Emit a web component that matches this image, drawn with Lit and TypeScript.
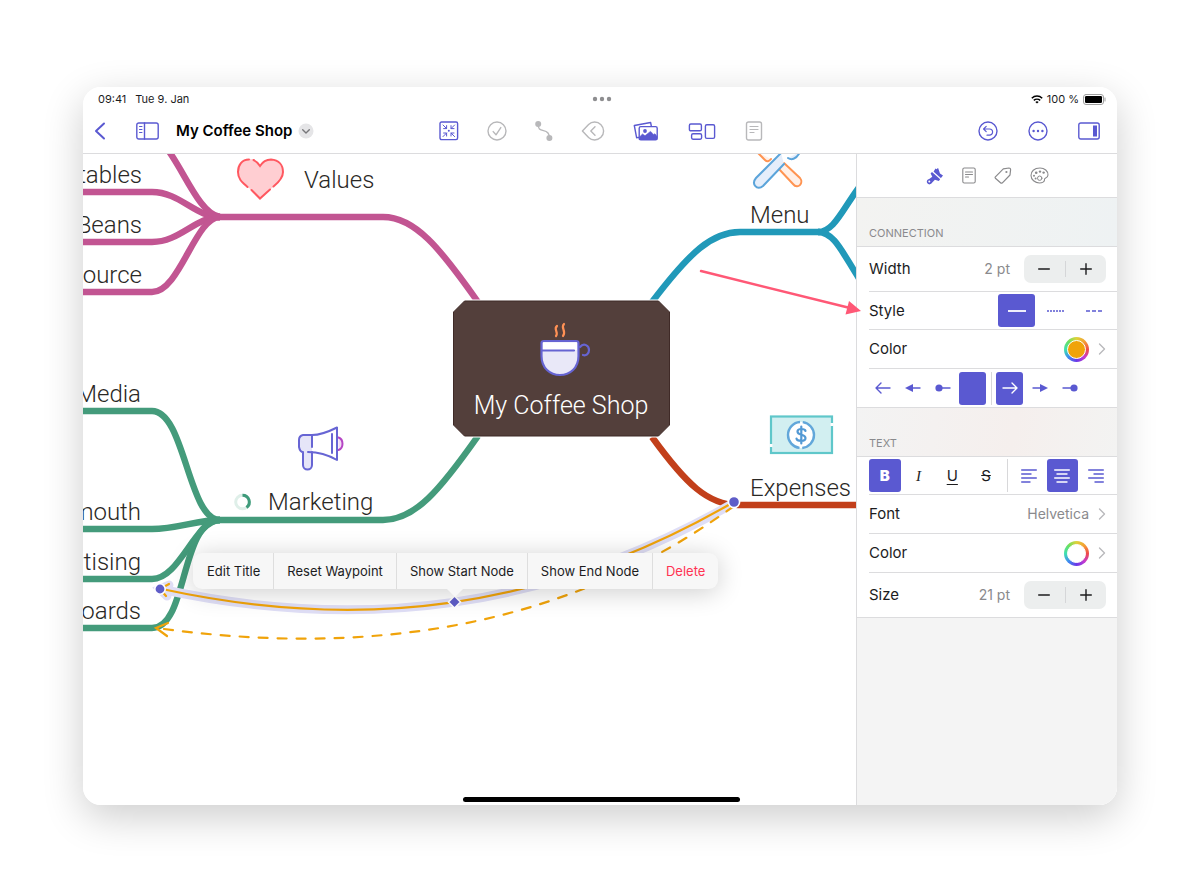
import { LitElement, html, svg, css } from "lit";
import { customElement, state } from "lit/decorators.js";
import { classMap } from "lit/directives/class-map.js";

type Label = { text: string; x: number; y: number; end?: boolean };

const LABELS: Label[] = [
  { text: "tables", x: 142, y: 183, end: true },
  { text: "Beans", x: 142, y: 233, end: true },
  { text: "ource", x: 142, y: 283, end: true },
  { text: "Media", x: 141, y: 402, end: true },
  { text: "mouth", x: 141, y: 520, end: true },
  { text: "rtising", x: 141, y: 570, end: true },
  { text: "oards", x: 141, y: 619, end: true },
  { text: "Values", x: 304, y: 188 },
  { text: "Menu", x: 750, y: 223 },
  { text: "Marketing", x: 268, y: 510 },
  { text: "Expenses", x: 750, y: 496 },
];

const BRANCHES: { color: string; paths: string[] }[] = [
  {
    color: "#c25592",
    paths: [
      "M478 302C440 248 415 217 383 217H218",
      "M80 192H152C180 192 195 217 220 217",
      "M80 242H152C180 242 195 217 220 217",
      "M80 292H152C180 292 195 217 220 217",
      "M168 150C185 173 200 214 220 217",
    ],
  },
  {
    color: "#2199b9",
    paths: [
      "M652 302C690 252 712 232 740 232H820",
      "M818 232C834 232 842 210 860 186",
      "M818 232C834 232 842 252 860 280",
    ],
  },
  {
    color: "#449b7b",
    paths: [
      "M478 436C440 490 415 520 383 520H215",
      "M80 411H152C185 411 188 520 220 520",
      "M80 529H152C177 529 197 520 220 520",
      "M80 579H152C180 579 195 520 220 520",
      "M80 628H152C188 628 180 520 220 520",
    ],
  },
  { color: "#c23f1a", paths: ["M652 437C686 484 708 505 738 505H860"] },
];

@customElement("app-root")
export class AppRoot extends LitElement {
  static styles = css`
    :host {
      --accent: #5a59d1;
      --line: #dcdcde;
      display: flex;
      box-sizing: border-box;
      min-height: 100vh;
      padding: 87px 83px 86px;
      background: #fff;
      color: #1c1c1e;
      font: 15px/20px Inter, "Liberation Sans", sans-serif;
    }
    * { box-sizing: border-box; }
    svg { display: block; flex: none; fill: none; stroke: currentColor; }
    button {
      display: flex;
      align-items: center;
      justify-content: center;
      margin: 0;
      padding: 0;
      border: 0;
      background: none;
      color: inherit;
      font: inherit;
      cursor: pointer;
    }
    .window {
      flex: 1;
      min-width: 0;
      display: flex;
      flex-direction: column;
      position: relative;
      background: #fff;
      border-radius: 18px;
      overflow: hidden;
    }
    .shadow {
      flex: 1;
      min-width: 0;
      display: flex;
      border-radius: 18px;
      box-shadow: 0 12px 40px rgba(0, 0, 0, 0.2);
    }
    .status {
      display: grid;
      grid-template-columns: 1fr auto 1fr;
      align-items: center;
      height: 24px;
      padding: 0 11px 0 15px;
      font-size: 11px;
      line-height: 16px;
    }
    .status-left { display: flex; gap: 9px; }
    .status-right { display: flex; gap: 4px; align-items: center; justify-content: flex-end; }
    .dots { color: #8e8e90; }
    .toolbar {
      display: grid;
      grid-template-columns: 1fr auto 1fr;
      align-items: center;
      height: 43px;
      padding: 0 10px 2px 11px;
      border-bottom: 1px solid var(--line);
      color: var(--accent);
    }
    .group { display: flex; align-items: center; }
    .left { gap: 17px; }
    .back { width: 12px; }
    .panel-left { padding-left: 13px; }
    .title { gap: 6px; color: #000; font-weight: 600; font-size: 15px; white-space: nowrap; }
    .center { gap: 28px; }
    .wide { width: 30px; }
    .right { justify-content: flex-end; gap: 30px; padding-right: 7px; }
    .off { color: #b8b8ba; }
    .body { flex: 1; display: flex; min-height: 0; position: relative; }
    .canvas { flex: 1; min-width: 0; position: relative; overflow: hidden; }
    .map { position: absolute; left: 0; top: 0; }
    .map text {
      stroke: none;
      fill: #2a2825;
      font-family: Roboto, "Liberation Sans", sans-serif;
      font-weight: 300;
      font-size: 24px;
    }
    .map .end { text-anchor: end; }
    .map .root-label { fill: #fff; text-anchor: middle; font-size: 25px; }
    .menu {
      position: absolute;
      left: 110px;
      top: 399px;
      display: flex;
      height: 36px;
      border-radius: 9px;
      background: #f7f7f7;
      box-shadow: 0 3px 26px rgba(0, 0, 0, 0.2);
      color: #1c1c1e;
      font-size: 13px;
    }
    .menu::after {
      content: "";
      position: absolute;
      left: 254px;
      top: 36px;
      border: 8px solid transparent;
      border-top-color: #f7f7f7;
      border-bottom: 0;
    }
    .menu button { padding: 0 13px; border-left: 1px solid #dedede; white-space: nowrap; }
    .menu button:first-child { border-left: 0; padding-left: 14px; }
    .menu .delete { color: #ff3352; }
    .pointer { position: absolute; right: 0; top: 0; pointer-events: none; }
    .home {
      position: absolute;
      left: 50%;
      bottom: 3px;
      width: 277px;
      height: 5px;
      margin-left: -137px;
      border-radius: 3px;
      background: #000;
    }
    .side {
      flex: none;
      width: 261px;
      border-left: 1px solid var(--line);
      background: #f4f4f4;
    }
    .tabs {
      display: flex;
      align-items: center;
      justify-content: center;
      gap: 18px;
      height: 44px;
      border-bottom: 1px solid var(--line);
      background: #fff;
      color: #8a8a8c;
    }
    .tabs .on { color: var(--accent); }
    h2 {
      display: flex;
      align-items: flex-end;
      height: 49px;
      margin: 0;
      padding: 0 12px 3px;
      border-bottom: 1px solid var(--line);
      background: linear-gradient(100deg, #f3f3f1, #eef2f3);
      color: #8a8a8d;
      font-size: 11px;
      font-weight: 400;
    }
    h2.warm {
      height: 50px;
      border-top: 1px solid var(--line);
      background: linear-gradient(100deg, #f3f3f3, #f5efed 60%, #f3f3f2);
    }
    .rows { margin: 0; padding: 0 0 0 12px; background: #fff; }
    .row {
      display: flex;
      align-items: center;
      height: 39px;
      padding-right: 11px;
      border-bottom: 1px solid var(--line);
      width: 100%;
    }
    .rows .row:last-child { border-bottom: 0; }
    .row.tall { height: 45px; }
    .row.tall:last-child { height: 44px; }
    .row.short { height: 38px; }
    .name { flex: 1; text-align: left; color: #1c1c1e; }
    .value { color: #8a8a8d; font-size: 14px; margin-right: 14px; }
    .stepper {
      display: flex;
      width: 82px;
      height: 28px;
      border-radius: 7px;
      background: #eceeee;
      align-items: center;
    }
    .stepper button { flex: 1; height: 28px; }
    .stepper i { width: 1px; height: 16px; background: #d5d6d8; }
    .seg { width: 37px; height: 33px; border-radius: 3px; color: var(--accent); }
    .seg.on { background: var(--accent); color: #fff; }
    .styles { display: flex; gap: 2px; margin-right: -7px; }
    .ring {
      width: 25px;
      height: 25px;
      border-radius: 50%;
      padding: 3px;
      margin-right: 9px;
      background: conic-gradient(#ddd23a, #f59e33 45deg, #ef4a4a 90deg, #c53ad0 135deg, #6a38e8 180deg, #3f8cf0 225deg, #3fe0b0 270deg, #6be060 315deg, #ddd23a);
    }
    .ring b { display: block; width: 19px; height: 19px; border: 1px solid #fff; border-radius: 50%; background: #f0a30a; }
    .ring b.white { background: #fff; }
    .chev { color: #b9b9bc; }
    .ends { gap: 3px; padding-right: 0; }
    .ends .seg { width: 27px; }
    .ends i, .marks i { width: 1px; height: 33px; background: #d8d8da; }
    .ends i { margin: 0 1px 0 2px; }
    .marks { gap: 2px; padding-right: 5px; }
    .marks .seg { width: 32px; font-size: 15px; }
    .marks .seg:nth-child(-n + 4):not(.on) { color: #1c1c1e; }
    .marks i { margin: 0 3px; }
    .bold { font-weight: 900; }
    .italic { font-family: "Liberation Serif", serif; font-style: italic; font-size: 18px; }
    .under { text-decoration: underline; text-underline-offset: 3px; }
    .strike { text-decoration: line-through; }
    .foot { border-top: 1px solid var(--line); }
    .font-value { margin-right: 9px; }
  `;

  @state() private line = 0;
  @state() private startCap = 3;
  @state() private endCap = 0;
  @state() private marks = new Set(["bold"]);
  @state() private align = 1;
  @state() private lineWidth = 2;
  @state() private size = 21;

  private icon(w: number, h: number, body: unknown) {
    return html`<svg width=${w} height=${h} viewBox="0 0 ${w} ${h}" stroke-width="1.4" stroke-linecap="round" stroke-linejoin="round" aria-hidden="true">${body}</svg>`;
  }

  private noteIcon(w: number, h: number) {
    return this.icon(w, h, svg`<rect x="1.500" y="1" width=${w - 3} height=${h - 2} rx="2"/><path d="M5 5.500H${w - 5}M5 8.500H${w - 5}M5 11.500H${w / 2}" stroke-width="1.200"/>`);
  }

  private chevron() {
    return html`<span class="chev">${this.icon(8, 12, svg`<path d="M1.500 1L6.500 6L1.500 11"/>`)}</span>`;
  }

  private renderToolbar() {
    return html`<header class="toolbar">
      <div class="group left">
        <button class="back" aria-label="Back">${this.icon(12, 18, svg`<path d="M10 1.500L2 9L10 16.500" stroke-width="2"/>`)}</button>
        <button class="panel-left" aria-label="Outline">${this.icon(23, 18, svg`<rect x=".8" y="1" width="21.400" height="16" rx="2"/><path d="M8.500 1V17"/><path d="M3.500 4.500H6M3.500 7.500H6M3.500 10.500H6" stroke-width="1"/>`)}</button>
        <button class="title">My Coffee Shop ${this.icon(16, 16, svg`<circle cx="8" cy="8" r="7.500" fill="#e5e5e7" stroke="none"/><path d="M4.700 6.700L8 10L11.300 6.700" stroke="#77777a"/>`)}</button>
      </div>
      <div class="group center">
        <button aria-label="Focus">${this.icon(20, 20, svg`<rect x="1" y="1" width="17.600" height="17.600" rx="1.500"/><g stroke-width="1"><path d="M4 4L7.600 7.600M7.600 4.600V7.600H4.600M15.600 4L12 7.600M12 4.600V7.600H15M4 15.600L7.600 12M4.600 12H7.600V15M15.600 15.600L12 12M15 12H12V15"/></g><circle cx="9.800" cy="9.800" r="1" fill="currentColor" stroke="none"/>`)}</button>
        <button class="off" aria-label="Task">${this.icon(20, 20, svg`<circle cx="10" cy="10" r="9"/><path d="M6.200 10.600L9 13.800L13.800 6.600"/>`)}</button>
        <button class="off" aria-label="Connection">${this.icon(18, 20, svg`<circle cx="3.200" cy="3" r="3" fill="currentColor" stroke="none"/><circle cx="14.400" cy="17" r="3" fill="currentColor" stroke="none"/><path d="M3.200 3C3 8 5 9 8.500 9.600S14.500 12 14.400 17"/>`)}</button>
        <button class="off" aria-label="Tag">${this.icon(24, 20, svg`<path d="M1.400 10L7.600 3.400C9.400 1.600 11.300 1 13.600 1A9 9 0 0 1 13.600 19C11.300 19 9.400 18.400 7.600 16.600Z"/><path d="M14 5.800L9.800 10L14 14.200"/>`)}</button>
        <button aria-label="Images">${this.icon(26, 20, svg`<path d="M5.600 16.400L3.600 16.700L1.300 4.500L17.600 1.500L18.300 5"/><rect x="6.200" y="5.600" width="18" height="13.200" rx="1.600"/><circle cx="12" cy="10" r="1.900" fill="currentColor" stroke="none"/><path d="M6.500 16L9.500 13L12 14.800L17.400 10.400C19 11 19.500 13.500 20.500 13.400L22 12.800L24 15.500V18.500H6.500Z" fill="currentColor" stroke-width=".6"/>`)}</button>
        <button class="wide" aria-label="Layout">${this.icon(28, 18, svg`<rect x="1.400" y="2" width="12" height="6.800" rx="1.400"/><rect x="3.600" y="11.800" width="10" height="5.400" rx="1.400"/><rect x="17.400" y="2.800" width="9.200" height="13.600" rx="1.400"/>`)}</button>
        <button class="off" aria-label="Note">${this.noteIcon(18, 20)}</button>
      </div>
      <div class="group right">
        <button aria-label="Undo">${this.icon(20, 20, svg`<circle cx="10" cy="10" r="9"/><path d="M6 8H11.500A3 3 0 0 1 11.500 14.200H9M8.200 5.400L5.600 8L8.200 10.600" stroke-width="1.200"/>`)}</button>
        <button aria-label="More">${this.icon(20, 20, svg`<circle cx="10" cy="10" r="9"/><g fill="currentColor" stroke="none"><circle cx="5.600" cy="10" r="1.200"/><circle cx="10" cy="10" r="1.200"/><circle cx="14.400" cy="10" r="1.200"/></g>`)}</button>
        <button aria-label="Inspector">${this.icon(22, 18, svg`<rect x=".8" y="1" width="20.400" height="16" rx="2"/><path d="M15 3.600H19V14.400H15Z" fill="currentColor" stroke="none"/>`)}</button>
      </div>
    </header>`;
  }

  private renderMap() {
    return html`<svg class="map" width="773" height="651" viewBox="83 154 773 651">
      ${BRANCHES.map((b) => svg`<g stroke=${b.color} stroke-width="6.400">${b.paths.map((d) => svg`<path d=${d}/>`)}</g>`)}
      ${LABELS.map((l) => svg`<text class=${l.end ? "end" : ""} x=${l.x} y=${l.y}>${l.text}</text>`)}

      <g stroke="#ff5860" stroke-width="2" stroke-linecap="round">
        <path d="M260 166C264 160 268 159 271 159C278 159 283 165 283 172C283 178 280 182 272 188L260 199L249 188C241 182 238 178 238 172C238 164 244 159 250 159C255 159 258 162 260 166Z" fill="#ffced2" stroke="none"/>
        <path d="M249 159.500C242 159.500 238 165 238 172C238 179 242 182 247.500 187M253.500 160Q257 161.500 260 166Q264 159.500 271 159.500C279 160 283 165 283 172C283 178 279 182 273.500 186.500M251.500 190L260 198.500L270 189.500"/>
      </g>

      <g stroke-width="2" stroke-linecap="round" stroke-linejoin="round">
        <path d="M757 152L765 160Q768 163 771 159" fill="#fff0e8" stroke="#ff9452"/>
        <path d="M778 168L793 184C798 190 804 183 800 178L784 163Z" fill="#fff0e8" stroke="#ff9452"/>
        <path d="M781 153L756 178C751 184 757 191 763 186L784 164" fill="#e5eefb" stroke="#5ba4da"/>
        <path d="M800 152C796 160 791 160 788 158" fill="#e5eefb" stroke="#5ba4da"/>
      </g>

      <path d="M464.500 301H658.500L669.500 312V425L658.500 436H464.500L453.500 425V312Z" fill="#533f3b" stroke="#fff" stroke-width="3"/>
      <path d="M464.500 301H658.500L669.500 312V425L658.500 436H464.500L453.500 425V312Z" fill="#533f3b" stroke="#3f2a27" stroke-width="1"/>
      <text class="root-label" x="561" y="414">My Coffee Shop</text>
      <g stroke-width="2.200" stroke-linecap="round">
        <path d="M557 326C553 329 559 332 556 336M564 324C560 328 567 331 563 336" stroke="#ff9155"/>
        <path d="M541.500 343Q541.500 341 544 341H576Q578.500 341 578.500 343V356C578.500 368 570 375 560 375S541.500 368 541.500 356Z" fill="#e9e8f8" stroke="#6664d2"/>
        <path d="M543 342.500H577V350H543Z" fill="#fff" stroke="none"/>
        <path d="M542 350.500H574M580 347C584 342 589 346 589 350S586 356 583 355" stroke="#6664d2"/>
      </g>

      <g stroke="#5fc7ca" stroke-width="2.200">
        <rect x="771" y="416.500" width="61" height="36.500" fill="#d2eff1"/>
        <path d="M771 444V447M832 423V426" stroke="#fff" stroke-width="3"/>
        <circle cx="801" cy="435" r="13" fill="#fff" stroke="#62a7da" stroke-width="2.400" stroke-dasharray="38 2.840" stroke-dashoffset="19"/>
        <path d="M805.500 431C805 428.500 797.500 428 797.500 431.500C797.500 436 805.500 433.500 805.500 438C805.500 442 797 441.500 796.500 438.500M801.300 426.500V443.500" stroke="#5299d4" stroke-width="2.200" stroke-linecap="round"/>
      </g>

      <g stroke="#6765d4" stroke-width="2" stroke-linecap="round" stroke-linejoin="round">
        <path d="M338.500 437.500A5.500 6.500 0 0 1 338.500 450" fill="#f3dcf5" stroke="#b545c4"/>
        <path d="M312 435L303 435Q299 436 299 440V447Q300 452 303 452V465A4 4 0 0 0 312 465V452" fill="#e6e5f8"/>
        <path d="M312 435C322 435 330 431 337 427.500V460C330 456 322 452 308 452M312 436V447M332 434V453" fill="none"/>
      </g>

      <circle cx="242.500" cy="502" r="6.800" stroke="#dfefe9" stroke-width="3"/>
      <path d="M242.500 495.200A6.800 6.800 0 0 1 246.500 507.500" stroke="#3f9b7b" stroke-width="3"/>

      <g stroke-linecap="round">
        <path d="M160 589C360 632 545 611 734 503" stroke="#dfdef6" stroke-width="9"/>
        <path d="M169 585L160 589L167 596" stroke="#dfdef6" stroke-width="9"/>
        <path d="M162 589C360 632 545 611 732 503M169 584L160 589L166 596" stroke="#f0a30a" stroke-width="2.200"/>
        <path d="M164 629C360 655 560 633 734 506" stroke="#f0a30a" stroke-width="2.200" stroke-dasharray="9 10"/>
        <path d="M168 623L156 628L167 636" stroke="#f0a30a" stroke-width="2.200"/>
      </g>
      <g fill="#5f5dc8" stroke="#fff" stroke-width="1.600">
        <circle cx="160" cy="589" r="5.200"/>
        <circle cx="734" cy="502" r="5.600"/>
        <path d="M454.500 596L460.500 602L454.500 608L448.500 602Z"/>
      </g>
    </svg>`;
  }

  private stepper(label: string, minus: () => void, plus: () => void) {
    return html`<span class="stepper">
      <button aria-label="Decrease ${label}" @click=${minus}>${this.icon(12, 12, svg`<path d="M.7 6H11.300"/>`)}</button><i></i>
      <button aria-label="Increase ${label}" @click=${plus}>${this.icon(12, 12, svg`<path d="M.7 6H11.300M6 .7V11.300"/>`)}</button>
    </span>`;
  }

  private seg(on: boolean, label: string, click: () => void, body: unknown, extra = "plain") {
    return html`<button class=${classMap({ seg: true, on, [extra]: true })} aria-label=${label} aria-pressed=${on} @click=${click}>${body}</button>`;
  }

  private toggle(name: string) {
    const next = new Set(this.marks);
    next.has(name) ? next.delete(name) : next.add(name);
    this.marks = next;
  }

  private renderSide() {
    const lines = ["none", "2 1", "4 2"];
    const starts = [
      svg`<path d="M1 6H15M6 1L1 6L6 11"/>`,
      svg`<path d="M7 6H15"/><path d="M0 6L8 2V10Z" fill="currentColor" stroke="none"/>`,
      svg`<path d="M4 6H15"/><circle cx="4" cy="6" r="3.600" fill="currentColor" stroke="none"/>`,
      "",
    ];
    const ends = [
      svg`<path d="M1 6H15M10 1L15 6L10 11"/>`,
      svg`<path d="M1 6H9"/><path d="M16 6L8 2V10Z" fill="currentColor" stroke="none"/>`,
      svg`<path d="M1 6H12"/><circle cx="12" cy="6" r="3.600" fill="currentColor" stroke="none"/>`,
    ];
    const marks = [["bold", "B"], ["italic", "I"], ["under", "U"], ["strike", "S"]];
    const aligns = ["M.7 1H15.300M.7 5H10M.7 9H15.300M.7 13H9", "M.7 1H15.300M3 5H13M.7 9H15.300M3 13H13", "M.7 1H15.300M6 5H15.300M.7 9H15.300M7 13H15.300"];
    return html`<aside class="side">
      <nav class="tabs">
        <button class="on" aria-label="Style">${this.icon(18, 18, svg`<g fill="currentColor" stroke="none"><path d="M7.500 4.800L9.500 1.400L10.800 2.200L12 .8L14 6.500L17 8.400L14.800 11.200Z"/><path d="M6 5L14.200 12.200L12.800 14L8.900 12.700L6 15.800A2.700 2.700 0 1 1 3.200 12L6.300 9.700L4.600 6.600Z"/></g><path d="M7.200 4.600L15 11.500" stroke="#fff" stroke-width=".4"/><circle cx="3.300" cy="14.600" r="1" fill="#fff" stroke="none"/>`)}</button>
        <button aria-label="Note">${this.icon(14, 17, svg`<g stroke-width="1.100"><rect x=".8" y="1" width="12.400" height="15" rx="1.500"/><path d="M3.500 5H10.500M3.500 7.500H10.500M3.500 10H6.500"/></g>`)}</button>
        <button aria-label="Tags">${this.icon(18, 17, svg`<g stroke-width="1.200"><path d="M1.400 9.800L9.300 1.800L15 1Q16.600 1 16.600 2.600L16 8L8.400 15.800Q7.400 16.600 6.500 15.800L1.400 11.200Q.8 10.500 1.400 9.800Z"/></g><circle cx="12.400" cy="5" r="1.100" fill="currentColor" stroke="none"/>`)}</button>
        <button aria-label="Theme">${this.icon(19, 17, svg`<path d="M10 1C4 1 1 4.500 1 8.500S5 16 9.500 16C12 16 15 14.800 14.500 12.500C14 10.500 17.800 11.500 18 8C18.200 4 14.500 1 10 1Z" stroke-width="1.100"/><circle cx="9.700" cy="11.200" r="2.200" stroke-width="1"/><g fill="currentColor" stroke="none"><circle cx="4" cy="8.800" r="1"/><circle cx="6.200" cy="5.800" r="1.300"/><circle cx="10" cy="4.600" r="1.200"/><circle cx="13.600" cy="5.600" r="1.200"/><circle cx="5.600" cy="11.500" r="1"/></g>`)}</button>
      </nav>
      <h2>CONNECTION</h2>
      <div class="rows">
        <div class="row tall"><span class="name">Width</span><span class="value">${this.lineWidth} pt</span>${this.stepper("width", () => (this.lineWidth = Math.max(1, this.lineWidth - 1)), () => this.lineWidth++)}</div>
        <div class="row short"><span class="name">Style</span><span class="styles">${lines.map((d, i) =>
          this.seg(this.line === i, ["Solid", "Dotted", "Dashed"][i], () => (this.line = i), html`<svg width="20" height="4" viewBox="0 0 20 4" stroke-width=${i ? 1.4 : 1.8}><path d="M1 2H19" stroke-dasharray=${d}/></svg>`))}</span></div>
        <button class="row"><span class="name">Color</span><span class="ring"><b></b></span>${this.chevron()}</button>
        <div class="row short ends">
          ${starts.map((b, i) => this.seg(this.startCap === i, `Start cap ${i + 1}`, () => (this.startCap = i), this.icon(16, 12, b)))}<i></i>
          ${ends.map((b, i) => this.seg(this.endCap === i, `End cap ${i + 1}`, () => (this.endCap = i), this.icon(16, 12, b)))}
        </div>
      </div>
      <h2 class="warm">TEXT</h2>
      <div class="rows">
        <div class="row short marks">
          ${marks.map(([k, t]) => this.seg(this.marks.has(k), k, () => this.toggle(k), t, k))}<i></i>
          ${aligns.map((d, i) => this.seg(this.align === i, ["Left", "Center", "Right"][i], () => (this.align = i), this.icon(16, 14, svg`<path d=${d} stroke-width="1.400"/>`)))}
        </div>
        <button class="row"><span class="name">Font</span><span class="value font-value">Helvetica</span>${this.chevron()}</button>
        <button class="row"><span class="name">Color</span><span class="ring"><b class="white"></b></span>${this.chevron()}</button>
        <div class="row tall"><span class="name">Size</span><span class="value">${this.size} pt</span>${this.stepper("size", () => this.size--, () => this.size++)}</div>
      </div>
      <div class="foot"></div>
    </aside>`;
  }

  render() {
    return html`<div class="shadow"><main class="window">
      <div class="status">
        <div class="status-left"><span>09:41</span><span>Tue 9. Jan</span></div>
        <span class="dots">${this.icon(20, 6, svg`<g fill="currentColor" stroke="none"><circle cx="3" cy="3" r="2.200"/><circle cx="10" cy="3" r="2.200"/><circle cx="17" cy="3" r="2.200"/></g>`)}</span>
        <div class="status-right">
          ${this.icon(12, 9, svg`<g stroke="#000" stroke-width="1.500" stroke-linecap="butt"><path d="M.8 3.200C3.700.4 8.300.4 11.200 3.200M2.800 5.400C4.600 3.700 7.400 3.700 9.200 5.400"/></g><path d="M6 8.600L4.300 6.900Q6 5.400 7.700 6.900Z" fill="#000" stroke="none"/>`)}
          <span>100 %</span>
          ${this.icon(23, 11, svg`<rect x=".5" y=".5" width="20" height="10" rx="2.500" stroke="#a0a0a0" stroke-width="1"/><rect x="2" y="2" width="17" height="7" rx="1.200" fill="#000" stroke="none"/><path d="M22 4V7" stroke="#a0a0a0" stroke-width="1"/>`)}
        </div>
      </div>
      ${this.renderToolbar()}
      <div class="body">
        <section class="canvas">
          ${this.renderMap()}
          <div class="menu">
            <button>Edit Title</button><button>Reset Waypoint</button><button>Show Start Node</button><button>Show End Node</button><button class="delete">Delete</button>
          </div>
        </section>
        ${this.renderSide()}
        <svg class="pointer" width="420" height="170" viewBox="697 154 420 170">
          <path d="M701 271L850 308" stroke="#ff5876" stroke-width="2.400" stroke-linecap="round"/>
          <path d="M861 311L845.500 314.500L849 301Z" fill="#ff5876" stroke="none"/>
        </svg>
      </div>
      <div class="home"></div>
    </main></div>`;
  }
}
